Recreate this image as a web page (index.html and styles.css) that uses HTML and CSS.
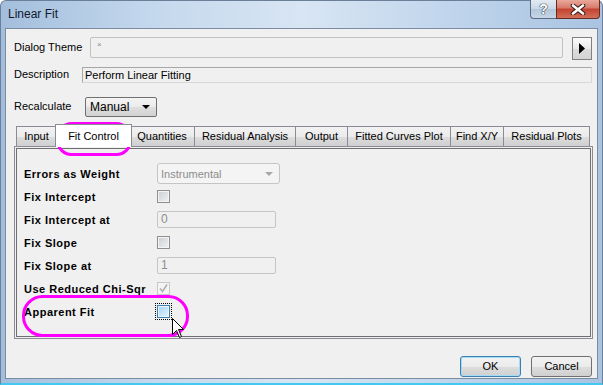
FILE: index.html
```html
<!DOCTYPE html>
<html lang="en">

<head>
    <meta charset="UTF-8">
    <title>Linear Fit</title>
    <link rel="stylesheet" href="styles.css">
</head>

<body>
    <div class="window">
        <div class="titlebar">
            <span class="title">Linear Fit</span>
            <div class="caption_btns">
                <span class="cap_btn cap_help">?</span>
                <span class="cap_btn cap_close">
                    <svg width="16" height="11" viewBox="0 0 16 11">
                        <path d="M3 1.5 L13 9.5 M13 1.5 L3 9.5" stroke="#3b1a14" stroke-width="4.6" stroke-linecap="round"/>
                        <path d="M3 1.5 L13 9.5 M13 1.5 L3 9.5" stroke="#fff" stroke-width="2.6" stroke-linecap="round"/>
                    </svg>
                </span>
            </div>
        </div>

        <div class="client">
            <div class="top_row theme_row">
                <span class="lbl theme_lbl">Dialog Theme</span>
                <div class="field theme_field">×</div>
                <span class="arrow_btn">
                    <svg width="6" height="11" viewBox="0 0 6 11"><path d="M0 0 L6 5.5 L0 11 Z" fill="#000"/></svg>
                </span>
            </div>
            <div class="top_row desc_row">
                <span class="lbl desc_lbl">Description</span>
                <div class="field desc_field">Perform Linear Fitting</div>
            </div>
            <div class="top_row recalc_row">
                <span class="lbl recalc_lbl">Recalculate</span>
                <div class="select">
                    <span>Manual</span>
                    <svg width="8" height="4" viewBox="0 0 8 4"><path d="M0 0 H8 L4 4 Z" fill="#000"/></svg>
                </div>
            </div>

            <div class="tabs">
                <span class="tab" style="width:41px">Input</span>
                <span class="tab tab_on" style="width:77px">Fit Control</span>
                <span class="tab" style="width:65px">Quantities</span>
                <span class="tab" style="width:101px">Residual Analysis</span>
                <span class="tab" style="width:52px">Output</span>
                <span class="tab" style="width:103px">Fitted Curves Plot</span>
                <span class="tab" style="width:53px">Find X/Y</span>
                <span class="tab" style="width:86px">Residual Plots</span>
            </div>
            <div class="panel">
                <div class="panel_inner">
                    <div class="opt_row">
                        <span class="opt_lbl">Errors as Weight</span>
                        <div class="combo_dis">
                            <span>Instrumental</span>
                            <svg width="8" height="4" viewBox="0 0 8 4"><path d="M0 0 H8 L4 4 Z" fill="#a7a7a7"/></svg>
                        </div>
                    </div>
                    <div class="opt_row">
                        <span class="opt_lbl">Fix Intercept</span>
                        <span class="chk"></span>
                    </div>
                    <div class="opt_row">
                        <span class="opt_lbl">Fix Intercept at</span>
                        <div class="edit_dis">0</div>
                    </div>
                    <div class="opt_row">
                        <span class="opt_lbl">Fix Slope</span>
                        <span class="chk"></span>
                    </div>
                    <div class="opt_row">
                        <span class="opt_lbl">Fix Slope at</span>
                        <div class="edit_dis">1</div>
                    </div>
                    <div class="opt_row">
                        <span class="opt_lbl">Use Reduced Chi-Sqr</span>
                        <span class="chk chk_dis">
                            <svg width="11" height="11" viewBox="0 0 11 11"><path d="M2 5.5 L4.5 8.5 L9 1.5" fill="none" stroke="#b0b0b0" stroke-width="1.6"/></svg>
                        </span>
                    </div>
                    <div class="opt_row">
                        <span class="opt_lbl">Apparent Fit</span>
                        <span class="chk chk_hover"></span>
                    </div>
                </div>
            </div>

            <div class="btn_row">
                <span class="btn btn_default">OK</span>
                <span class="btn">Cancel</span>
            </div>
        </div>

        <!-- annotations drawn over the dialog -->
        <svg class="marks" width="603" height="385" viewBox="0 0 603 385">
            <rect x="57.5" y="123.5" width="73" height="31" rx="14" fill="none" stroke="#ff00ff" stroke-width="3"/>
            <rect x="23.5" y="296.5" width="164" height="39" rx="19" fill="none" stroke="#ff00ff" stroke-width="3"/>
            <path d="M172.5 318.5 V334.5 L176.5 330.5 L179.5 337.5 L181.5 336.5 L178.5 329.5 L183.5 329.5 Z" fill="#fff" stroke="#000" stroke-width="1"/>
        </svg>
    </div>
</body>

</html>
```

FILE: styles.css
```css
body {
    margin: 0;
    width: 603px;
    height: 385px;
    overflow: hidden;
    font-family: "Liberation Sans", Arial, sans-serif;
    font-size: 11px;
    color: #000;
}

.window {
    position: relative;
    height: 385px;
    box-sizing: border-box;
    border: 1px solid #6b7f98;
    border-bottom: 2px solid #43c8f2;
    border-radius: 6px 6px 0 0;
    background: linear-gradient(to right, #a3bedc 0%, #c4d8ed 25%, #d8e5f3 50%, #c0d5ec 75%, #a9c3e1 100%);
}

.titlebar {
    height: 27px;
    display: flex;
    justify-content: space-between;
}

.title {
    padding-left: 7px;
    line-height: 27px;
    font-size: 12px;
    color: #111a2c;
}

.caption_btns {
    display: flex;
    margin-right: 2px;
    height: 19px;
    margin-top: -1px;
}

.cap_btn {
    display: flex;
    align-items: center;
    justify-content: center;
    height: 18px;
    border: 1px solid #5b6b80;
    border-top: none;
}

.cap_help {
    width: 25px;
    border-right: none;
    border-radius: 0 0 0 4px;
    background: linear-gradient(#e3ebf4, #c9d7e6 50%, #b4c6db 51%, #c6d6e8);
    font-weight: bold;
    font-size: 14px;
    color: #fff;
    text-shadow: 0 0 1px #2b3440, 0 0 1px #2b3440, 0 0 1px #2b3440;
}

.cap_close {
    width: 42px;
    border-color: #6a2a22;
    border-radius: 0 0 4px 0;
    background: linear-gradient(#e9a99b, #d7796a 45%, #c4412f 50%, #d2705a 100%);
}

.client {
    height: 351px;
    margin: 0 4px;
    box-sizing: border-box;
    padding: 8px 5px 0 8px;
    border: 1px solid #7c8ca0;
    background-color: #f0f0f0;
}

.top_row {
    display: flex;
    align-items: flex-start;
}

.lbl {
    line-height: 15px;
}

.field {
    box-sizing: border-box;
    border: 1px solid #c2c2c2;
    background-color: #f0f0f0;
}

.theme_row {
    height: 23px;
}

.theme_lbl {
    width: 76px;
    padding-top: 3px;
}

.theme_field {
    width: 473px;
    height: 21px;
    padding: 2px 0 0 6px;
    border-radius: 2px;
    font-size: 8px;
    color: #8a8a8a;
}

.arrow_btn {
    display: flex;
    align-items: center;
    justify-content: center;
    width: 20px;
    height: 23px;
    margin-left: 9px;
    box-sizing: border-box;
    border: 1px solid #808080;
    background: linear-gradient(#fbfbfb, #e9e9e9 50%, #dcdcdc 51%, #d4d4d4);
}

.desc_row {
    margin-top: 7px;
}

.desc_lbl {
    width: 68px;
}

.desc_field {
    flex: 1;
    height: 16px;
    padding-left: 2px;
    line-height: 14px;
    border-color: #a7a7a7 #d8d8d8 #d8d8d8 #a7a7a7;
}

.recalc_row {
    margin-top: 14px;
}

.recalc_lbl {
    width: 71px;
    padding-top: 2px;
}

.select {
    display: flex;
    align-items: center;
    justify-content: space-between;
    width: 72px;
    height: 20px;
    box-sizing: border-box;
    padding: 0 6px 0 4px;
    border: 1px solid #707070;
    border-radius: 2px;
    background: linear-gradient(#f4f4f4, #ebebeb 50%, #dedede 51%, #d2d2d2);
    font-size: 12px;
}

.tabs {
    display: flex;
    align-items: flex-end;
    height: 22px;
    margin-top: 7px;
    padding-left: 2px;
}

.tab {
    flex: none;
    height: 20px;
    box-sizing: border-box;
    border: 1px solid #898c95;
    border-left: none;
    border-bottom: none;
    background: linear-gradient(#f2f2f2, #ebebeb 50%, #dddddd 51%, #cfcfcf);
    text-align: center;
    line-height: 19px;
}

.tab:first-child {
    border-left: 1px solid #898c95;
}

.tab_on {
    position: relative;
    z-index: 1;
    height: 23px;
    margin: 0 -2px -1px -2px;
    border-left: 1px solid #898c95;
    background: #fff;
    line-height: 22px;
}

.panel {
    width: 579px;
    height: 193px;
    box-sizing: border-box;
    padding: 1px;
    border: 1px solid #898c95;
    background-color: #f0f0f0;
}

.panel_inner {
    height: 100%;
    box-sizing: border-box;
    padding: 13px 0 0 7px;
    border: 1px solid #6f6f6f;
}

.opt_row {
    display: flex;
    align-items: center;
    height: 23px;
}

.opt_lbl {
    width: 133px;
    font-weight: bold;
    letter-spacing: 0.5px;
}

.combo_dis {
    display: flex;
    align-items: center;
    justify-content: space-between;
    width: 123px;
    height: 21px;
    box-sizing: border-box;
    padding: 0 6px 0 3px;
    border: 1px solid #c5c5c5;
    border-radius: 3px;
    background-color: #f4f4f4;
    color: #8d8d8d;
    font-size: 11px;
}

.edit_dis {
    width: 119px;
    height: 17px;
    box-sizing: border-box;
    padding-left: 3px;
    border: 1px solid #c5c5c5;
    border-radius: 2px;
    background-color: #f0f0f0;
    color: #8d8d8d;
    line-height: 15px;
    font-size: 12px;
}

.chk {
    display: flex;
    align-items: center;
    justify-content: center;
    width: 13px;
    height: 13px;
    box-sizing: border-box;
    border: 1px solid #8e8f8f;
    background: linear-gradient(135deg, #c8ccd2, #f2f3f5);
    box-shadow: inset 0 0 0 1px #f4f4f4;
}

.chk_dis {
    border-color: #c8c8c8;
    background: #f4f4f4;
    box-shadow: none;
}

.chk_hover {
    border-color: #3c7fb1;
    background: linear-gradient(135deg, #a3d3f7, #e6f4fd);
    box-shadow: inset 0 0 0 1px #eaf6fd;
    outline: 1px dotted #000;
    outline-offset: 1px;
}

.btn_row {
    display: flex;
    justify-content: flex-end;
    margin-top: 17px;
}

.btn {
    width: 61px;
    height: 21px;
    box-sizing: border-box;
    margin-left: 10px;
    border: 1px solid #707070;
    border-radius: 3px;
    background: linear-gradient(#f2f2f2, #ebebeb 50%, #dddddd 51%, #cfcfcf);
    text-align: center;
    line-height: 19px;
}

.btn_default {
    border-color: #3c7fb1;
    box-shadow: inset 0 0 0 1px #a4dcf7;
}

.marks {
    position: absolute;
    top: -1px;
    left: -1px;
    pointer-events: none;
}
```
